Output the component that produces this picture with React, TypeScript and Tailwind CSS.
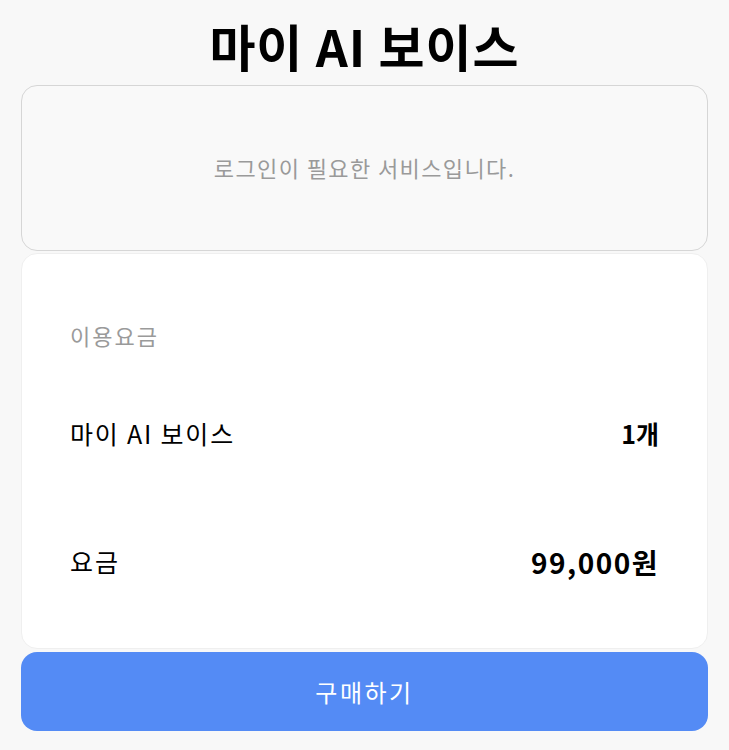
import React from "react";

const font = { fontFamily: '"Noto Sans CJK KR", "Noto Sans", sans-serif' };

export default function App() {
  return (
    <div className="min-h-screen bg-[#f8f8f8] px-[21px]" style={font}>
      {/* Title */}
      <div className="h-[85px] flex items-center justify-center">
        <h1 className="text-[50px] font-bold leading-none text-black tracking-[1px] pt-[4px]">
          마이 AI 보이스
        </h1>
      </div>

      {/* Login notice */}
      <div className="h-[166px] rounded-[16px] border border-[#d6d6d6] bg-[#f9f9f9] flex items-center justify-center">
        <p className="text-[22px] text-[#9a9a9a] tracking-[1.4px] -mt-[2px]">로그인이 필요한 서비스입니다.</p>
      </div>

      {/* Price card */}
      <div className="mt-[2px] h-[396px] rounded-[16px] border border-[#efefef] bg-white px-[48px] pt-[66px]">
        <div className="h-[30px] flex items-center text-[22px] text-[#9a9a9a] tracking-[2px]">이용요금</div>
        <div className="mt-[69px] h-[30px] flex items-center justify-between">
          <span className="text-[25px] text-black tracking-[1.8px]">마이 AI 보이스</span>
          <span className="text-[25px] font-bold text-black">1개</span>
        </div>
        <div className="mt-[98px] h-[30px] flex items-center justify-between">
          <span className="text-[25px] text-black tracking-[2px]">요금</span>
          <span className="text-[28px] font-bold text-black tracking-[1.5px]">99,000원</span>
        </div>
      </div>

      {/* Buy button */}
      <button className="mt-[3px] w-full h-[79px] rounded-[16px] bg-[#548bf5] text-white text-[24px] tracking-[2.5px] flex items-center justify-center">
        구매하기
      </button>
    </div>
  );
}
